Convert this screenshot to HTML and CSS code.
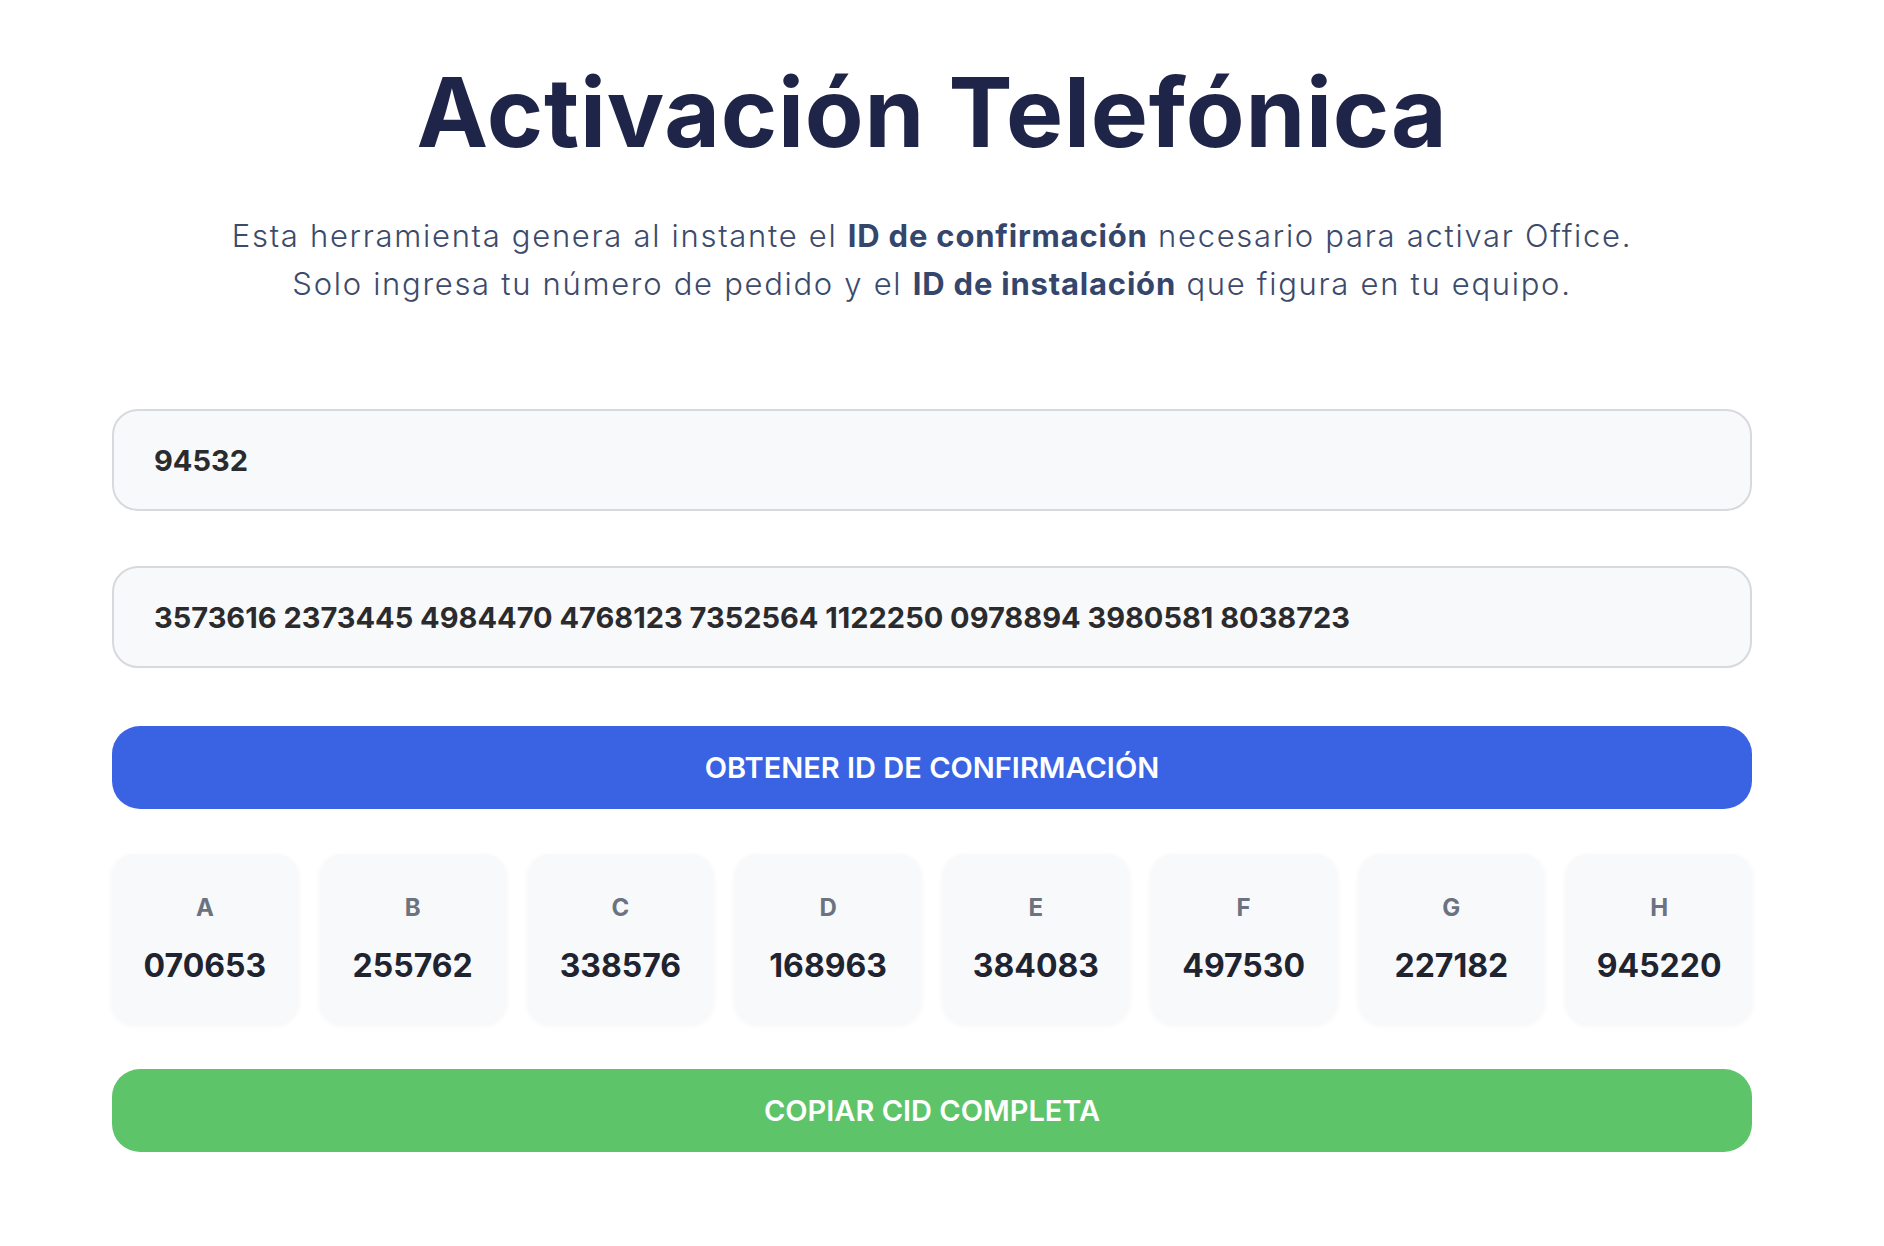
FILE: index.html
```html
<!DOCTYPE html>
<html lang="es">
<head>
<meta charset="utf-8">
<title>Activación Telefónica</title>
<link rel="stylesheet" href="styles.css">
</head>
<body>
<main class="page">
  <h1 class="title">Activación Telefónica</h1>
  <p class="lead">Esta herramienta genera al instante el <strong>ID de confirmación</strong> necesario para activar Office.<br>Solo ingresa tu número de pedido y el <strong>ID de instalación</strong> que figura en tu equipo.</p>
  <input class="field field-order" type="text" value="94532">
  <input class="field field-iid" type="text" value="3573616 2373445 4984470 4768123 7352564 1122250 0978894 3980581 8038723">
  <button class="btn btn-blue" type="button">OBTENER ID DE CONFIRMACIÓN</button>
  <div class="blocks">
    <div class="block"><span class="block-label">A</span><span class="block-value">070653</span></div>
    <div class="block"><span class="block-label">B</span><span class="block-value">255762</span></div>
    <div class="block"><span class="block-label">C</span><span class="block-value">338576</span></div>
    <div class="block"><span class="block-label">D</span><span class="block-value">168963</span></div>
    <div class="block"><span class="block-label">E</span><span class="block-value">384083</span></div>
    <div class="block"><span class="block-label">F</span><span class="block-value">497530</span></div>
    <div class="block"><span class="block-label">G</span><span class="block-value">227182</span></div>
    <div class="block"><span class="block-label">H</span><span class="block-value">945220</span></div>
  </div>
  <button class="btn btn-green" type="button">COPIAR CID COMPLETA</button>
</main>
</body>
</html>
```

FILE: styles.css
```css
* { box-sizing: border-box; }
html, body { margin: 0; padding: 0; background: #ffffff; }
body {
  font-family: Inter, "Liberation Sans", sans-serif;
  padding-right: 20px;
}
.page {
  width: 1640px;
  margin: 0 auto;
  padding-top: 54px;
  display: flex;
  flex-direction: column;
  align-items: stretch;
}
.title {
  margin: 0;
  font-size: 96px;
  line-height: 116px;
  font-weight: 700;
  color: #1f2548;
  text-align: center;
  letter-spacing: 0.8px;
}
.lead {
  margin: 42px 0 0;
  font-size: 31px;
  line-height: 48px;
  font-weight: 300;
  color: #3c4a6b;
  text-align: center;
  letter-spacing: 1.7px;
}
.lead strong { font-weight: 700; color: #34466b; letter-spacing: 0.8px; }
.field {
  display: block;
  width: 100%;
  height: 102px;
  border: 2px solid #d8d9de;
  border-radius: 26px;
  background: #f8f9fb;
  padding: 0 40px;
  font-family: Inter, "Liberation Sans", sans-serif;
  font-size: 29px;
  font-weight: 700;
  color: #2b2b2e;
  outline: none;
}
.field-order { margin-top: 101px; }
.field-iid { margin-top: 55px; }
.btn {
  display: block;
  width: 100%;
  height: 83px;
  border: 0;
  border-radius: 28px;
  font-family: Inter, "Liberation Sans", sans-serif;
  font-size: 29px;
  font-weight: 600;
  color: #ffffff;
  cursor: pointer;
}
.btn-blue { margin-top: 58px; background: #3a63e3; }
.btn-green { margin-top: 46px; background: #5ec46a; }
.blocks {
  margin-top: 45px;
  display: grid;
  grid-template-columns: repeat(8, 1fr);
  gap: 22px;
}
.block {
  height: 169px;
  background: #f8f9fb;
  border-radius: 22px;
  box-shadow: 0 2px 6px rgba(20, 30, 60, 0.05);
  display: flex;
  flex-direction: column;
  align-items: center;
  padding-top: 39px;
}
.block-label {
  font-size: 24px;
  line-height: 30px;
  font-weight: 700;
  color: #6b7280;
}
.block-value {
  margin-top: 23px;
  font-size: 32px;
  line-height: 40px;
  font-weight: 700;
  color: #1f2430;
}
```
